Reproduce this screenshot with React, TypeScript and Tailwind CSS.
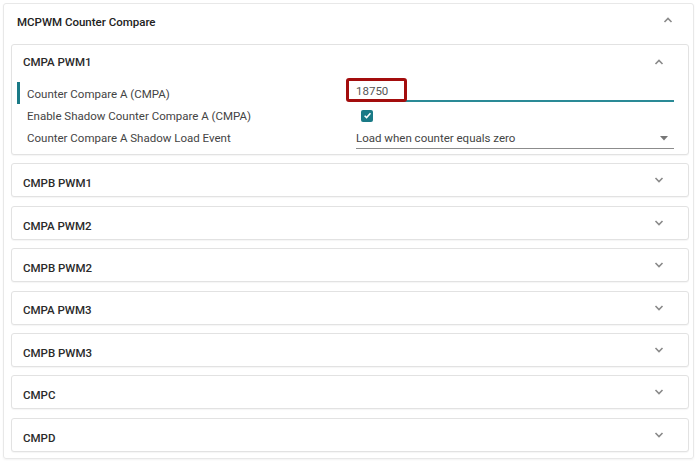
import React from 'react'

const Chevron = ({ up }: { up?: boolean }) => (
  <svg width="10" height="6" viewBox="0 0 10 6" className="block">
    {up ? (
      <polyline points="1.5,5 5,1.5 8.5,5" fill="none" stroke="#8a8a8a" strokeWidth="1.6" />
    ) : (
      <polyline points="1.5,1 5,4.5 8.5,1" fill="none" stroke="#8a8a8a" strokeWidth="1.6" />
    )}
  </svg>
)

const sections = ['CMPB PWM1', 'CMPA PWM2', 'CMPB PWM2', 'CMPA PWM3', 'CMPB PWM3', 'CMPC', 'CMPD']

function CollapsedCard({ title }: { title: string }) {
  return (
    <div className="h-[34px] flex items-center justify-between border border-[#e2e2e2] rounded-[3px] bg-white shadow-[0_1px_1px_rgba(0,0,0,0.04)] pl-[11px] pr-[24px]">
      <span className="pt-[7px] text-[11.5px] font-medium text-[#2a2a2a]">{title}</span>
      <Chevron />
    </div>
  )
}

export default function App() {
  return (
    <div className="w-[700px] h-[462px] bg-white pt-[3px] pl-[3px] pr-[6px] font-['Roboto',sans-serif]">
      <div className="h-[456px] border border-[#e8e8e8] rounded-[3px] shadow-[0_1px_2px_rgba(0,0,0,0.05)]">
        {/* outer header */}
        <div className="h-[40px] flex items-center justify-between pl-[13px] pr-[20px]">
          <span className="-mt-[2px] text-[11.5px] font-medium text-[#222]">MCPWM Counter Compare</span>
          <div className="-mt-[9px]">
            <Chevron up />
          </div>
        </div>

        <div className="ml-[7px] mr-[4px] flex flex-col gap-[8.4px]">
          {/* expanded card */}
          <div className="border border-[#e2e2e2] rounded-[3px] bg-white shadow-[0_1px_1px_rgba(0,0,0,0.04)] pb-[5px]">
            <div className="h-[33px] flex items-center justify-between pl-[11px] pr-[24px]">
              <span className="pt-[3px] text-[11.5px] font-medium text-[#2a2a2a]">CMPA PWM1</span>
              <Chevron up />
            </div>
            <div className="pt-[4px] text-[11.5px] text-[#444]">
              <div className="h-[22px] flex items-center">
                <div className="w-[344px] flex items-center h-full">
                  <div className="ml-[5px] w-[3px] h-[22px] bg-[#1a7a86]" />
                  <span className="ml-[7px] pt-[3px]">Counter Compare A (CMPA)</span>
                </div>
                <div className="relative w-[318px] h-full">
                  <div className="h-[18px] flex items-end text-[#555]">18750</div>
                  <div className="h-[2px] bg-[#2a8a96]" />
                  <div className="absolute left-[-10px] top-[-4px] w-[61px] h-[24px] border-[3px] border-[#a30d0d] rounded-[3px]" />
                </div>
              </div>
              <div className="h-[22px] flex items-center">
                <div className="w-[344px] pl-[15px] pt-[3px]">Enable Shadow Counter Compare A (CMPA)</div>
                <div className="w-[318px] pl-[5px] pt-[1px]">
                  <div className="w-[12px] h-[12px] rounded-[2px] bg-[#1a7a86] flex items-center justify-center">
                    <svg width="9" height="9" viewBox="0 0 10 10">
                      <polyline points="1.8,5.2 4,7.3 8.3,2.6" fill="none" stroke="#fff" strokeWidth="1.7" />
                    </svg>
                  </div>
                </div>
              </div>
              <div className="h-[23px] flex items-center">
                <div className="w-[344px] pl-[15px] pt-[3px]">Counter Compare A Shadow Load Event</div>
                <div className="w-[318px] h-full flex items-center justify-between border-b border-[#8c8c8c] pr-[6px] pt-[3px]">
                  <span className="text-[#444]">Load when counter equals zero</span>
                  <svg width="8" height="5" viewBox="0 0 8 5">
                    <polygon points="0,0 8,0 4,4.5" fill="#777" />
                  </svg>
                </div>
              </div>
            </div>
          </div>

          {sections.map((s) => (
            <CollapsedCard key={s} title={s} />
          ))}
        </div>
      </div>
    </div>
  )
}
